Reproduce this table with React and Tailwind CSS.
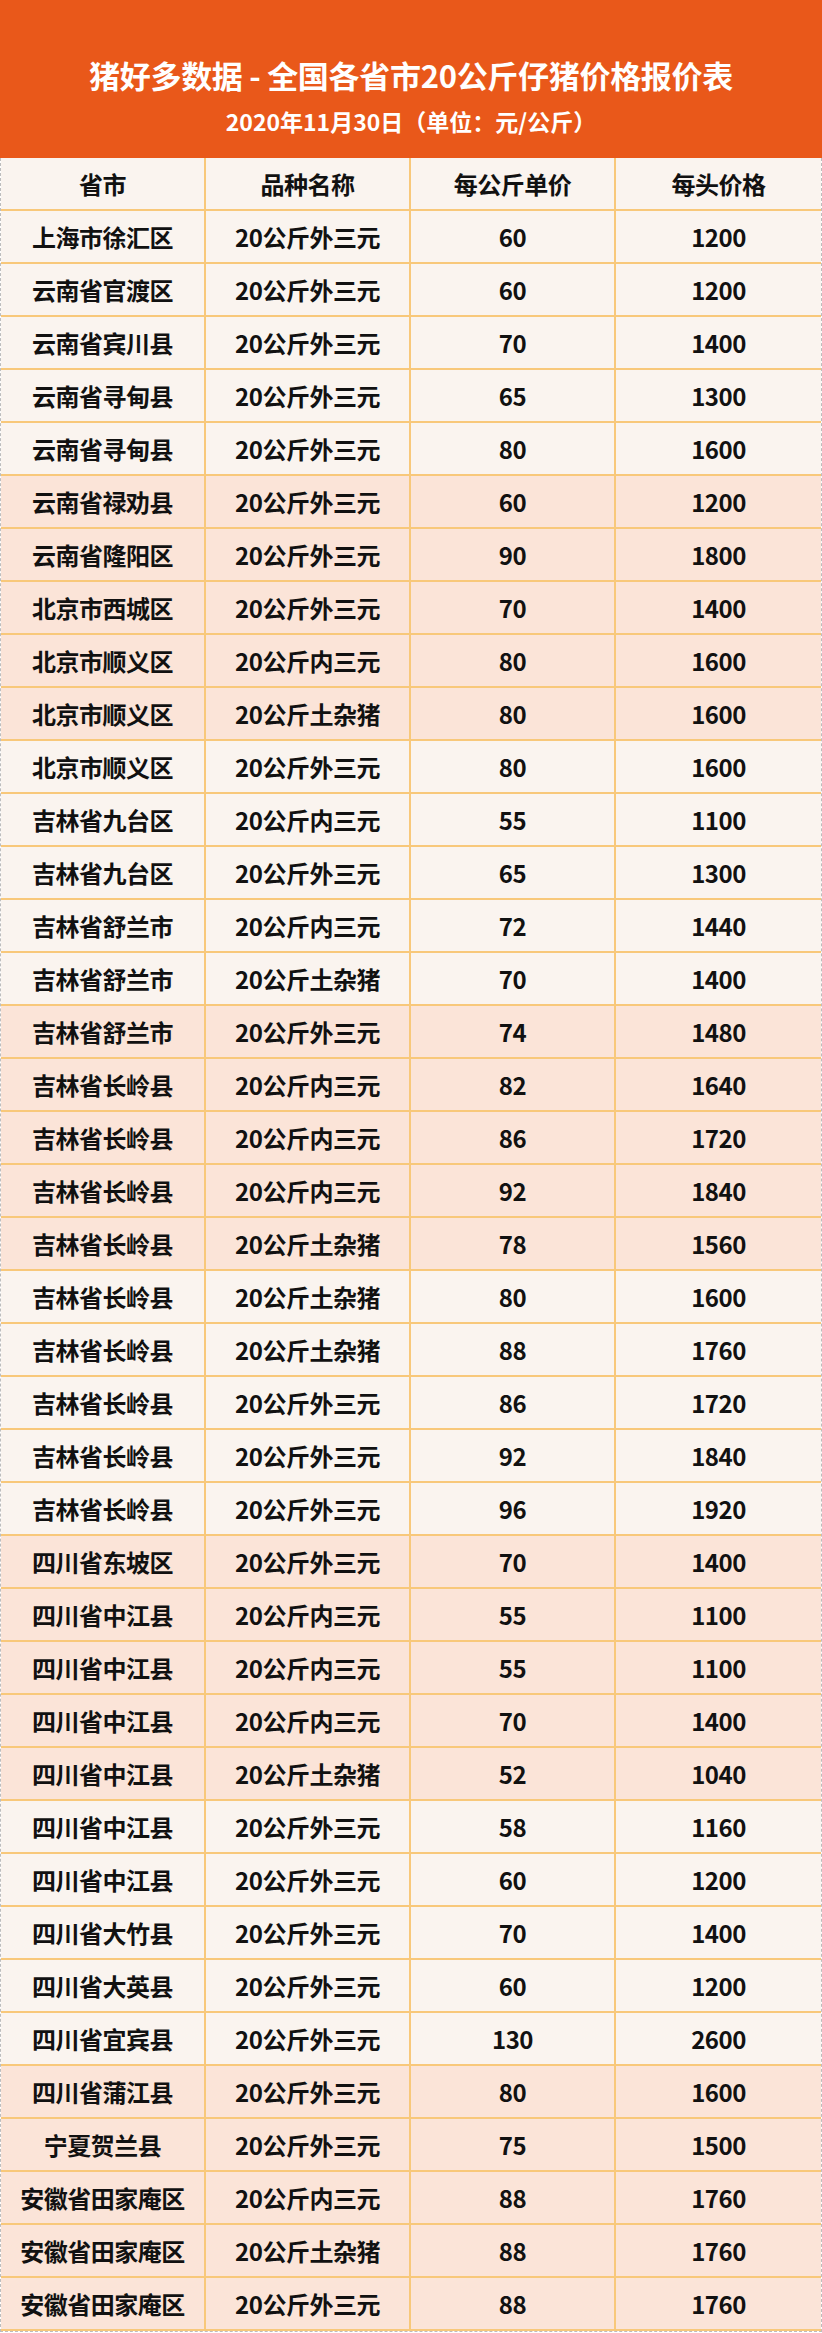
const rows = [
  ["上海市徐汇区", "20公斤外三元", "60", "1200"],
  ["云南省官渡区", "20公斤外三元", "60", "1200"],
  ["云南省宾川县", "20公斤外三元", "70", "1400"],
  ["云南省寻甸县", "20公斤外三元", "65", "1300"],
  ["云南省寻甸县", "20公斤外三元", "80", "1600"],
  ["云南省禄劝县", "20公斤外三元", "60", "1200"],
  ["云南省隆阳区", "20公斤外三元", "90", "1800"],
  ["北京市西城区", "20公斤外三元", "70", "1400"],
  ["北京市顺义区", "20公斤内三元", "80", "1600"],
  ["北京市顺义区", "20公斤土杂猪", "80", "1600"],
  ["北京市顺义区", "20公斤外三元", "80", "1600"],
  ["吉林省九台区", "20公斤内三元", "55", "1100"],
  ["吉林省九台区", "20公斤外三元", "65", "1300"],
  ["吉林省舒兰市", "20公斤内三元", "72", "1440"],
  ["吉林省舒兰市", "20公斤土杂猪", "70", "1400"],
  ["吉林省舒兰市", "20公斤外三元", "74", "1480"],
  ["吉林省长岭县", "20公斤内三元", "82", "1640"],
  ["吉林省长岭县", "20公斤内三元", "86", "1720"],
  ["吉林省长岭县", "20公斤内三元", "92", "1840"],
  ["吉林省长岭县", "20公斤土杂猪", "78", "1560"],
  ["吉林省长岭县", "20公斤土杂猪", "80", "1600"],
  ["吉林省长岭县", "20公斤土杂猪", "88", "1760"],
  ["吉林省长岭县", "20公斤外三元", "86", "1720"],
  ["吉林省长岭县", "20公斤外三元", "92", "1840"],
  ["吉林省长岭县", "20公斤外三元", "96", "1920"],
  ["四川省东坡区", "20公斤外三元", "70", "1400"],
  ["四川省中江县", "20公斤内三元", "55", "1100"],
  ["四川省中江县", "20公斤内三元", "55", "1100"],
  ["四川省中江县", "20公斤内三元", "70", "1400"],
  ["四川省中江县", "20公斤土杂猪", "52", "1040"],
  ["四川省中江县", "20公斤外三元", "58", "1160"],
  ["四川省中江县", "20公斤外三元", "60", "1200"],
  ["四川省大竹县", "20公斤外三元", "70", "1400"],
  ["四川省大英县", "20公斤外三元", "60", "1200"],
  ["四川省宜宾县", "20公斤外三元", "130", "2600"],
  ["四川省蒲江县", "20公斤外三元", "80", "1600"],
  ["宁夏贺兰县", "20公斤外三元", "75", "1500"],
  ["安徽省田家庵区", "20公斤内三元", "88", "1760"],
  ["安徽省田家庵区", "20公斤土杂猪", "88", "1760"],
  ["安徽省田家庵区", "20公斤外三元", "88", "1760"],
];

const head = ["省市", "品种名称", "每公斤单价", "每头价格"];

function Row({ cells, peach }) {
  return (
    <div className={`grid grid-cols-4 h-[53px] border-b-2 border-[#f8c87a] ${peach ? "bg-[#fbe4d8]" : "bg-[#faf4ef]"}`}>
      {cells.map((c, i) => (
        <div
          key={i}
          className={`flex items-center justify-center text-[24px] font-bold text-[#111] tracking-[-0.5px] ${i < 3 ? "border-r-2 border-[#f8c87a]" : ""}`}
        >
          {c}
        </div>
      ))}
    </div>
  );
}

export default function App() {
  return (
    <div
      className="w-[822px] bg-white"
      style={{ fontFamily: '"Noto Sans CJK SC", "Noto Sans", sans-serif' }}
    >
      <div className="h-[158px] bg-[#e9581a] flex flex-col items-center pt-[50px]">
        <h1 className="text-white font-bold text-[31px] leading-[50px] tracking-[-0.3px]">
          猪好多数据 - 全国各省市20公斤仔猪价格报价表
        </h1>
        <p className="text-white font-bold text-[23px] leading-[34px] mt-[4px]">
          2020年11月30日（单位：元/公斤）
        </p>
      </div>
      <div className="border-x border-b border-dashed border-[#bdbdbd]">
        <Row cells={head} peach={false} />
        {rows.map((r, i) => (
          <Row key={i} cells={r} peach={Math.floor(i / 5) % 2 === 1} />
        ))}
      </div>
    </div>
  );
}
